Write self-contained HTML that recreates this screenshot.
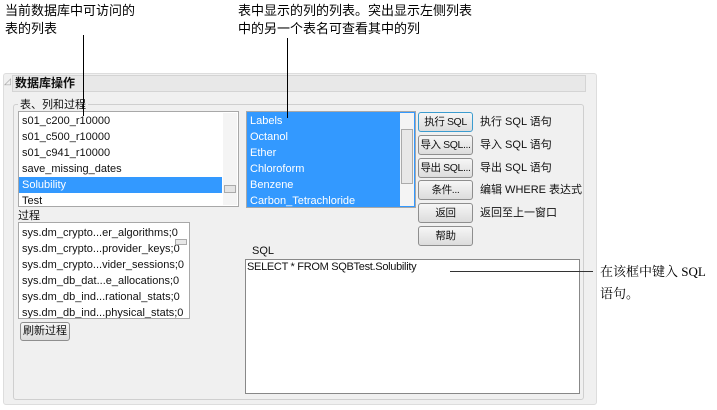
<!DOCTYPE html>
<html><head><meta charset="utf-8"><style>
*{margin:0;padding:0;box-sizing:border-box}
body{width:717px;height:410px;background:#fff;position:relative;overflow:hidden;font-family:"Liberation Sans","Noto Sans CJK SC",sans-serif;font-size:11px;color:#111}
.a{position:absolute;white-space:nowrap}
.ann{font-size:13px;line-height:18px;color:#000}
.box{position:absolute;background:#fff;border:1px solid #a8a8a8;overflow:hidden}
.row{height:16px;line-height:16px;padding-left:3px;font-size:11px;white-space:nowrap}
.sel{background:#3399ff;color:#fff}
.sb{position:absolute;top:1px;bottom:1px;right:1px;width:14px;background:#f4f4f4}
.btn{position:absolute;left:418px;width:55px;height:20px;border:1px solid #8e8e8e;border-radius:3px;background:linear-gradient(#f6f6f6,#dcdcdc);text-align:center;line-height:18px;font-size:10.5px;letter-spacing:-0.4px;white-space:nowrap;overflow:hidden}
.desc{position:absolute;left:480px;font-size:11px;line-height:20px;white-space:nowrap}
.vl{position:absolute;width:1px;background:#000}
</style></head><body>
<div class="a ann" style="left:5px;top:2px">当前数据库中可访问的<br>表的列表</div>
<div class="a ann" style="left:238px;top:2px">表中显示的列的列表。突出显示左侧列表<br>中的另一个表名可查看其中的列</div>

<div class="a" style="left:3px;top:73px;width:594px;height:332px;background:#f0f0f0;border:1px solid #ddd;border-radius:3px"></div>
<div class="a" style="left:4px;top:76px;font-size:9px;color:#999">◿</div>
<div class="a" style="left:12px;top:75px;width:574px;height:17px;background:#e8e8e8;border:1px solid #d4d4d4;font-size:12px;font-weight:bold;line-height:15px;padding-left:2px">数据库操作</div>
<div class="a" style="left:13px;top:104px;width:571px;height:296px;border:1px solid #cfcfcf;border-radius:3px"></div>
<div class="a" style="left:18px;top:96px;background:#f0f0f0;padding:0 2px;font-size:11px">表、列和过程</div>

<div class="box" style="left:18px;top:111px;width:221px;height:96px">
<div style="padding-top:1px">
<div class="row">s01_c200_r10000</div><div class="row">s01_c500_r10000</div><div class="row">s01_c941_r10000</div><div class="row">save_missing_dates</div><div class="row sel" style="margin-right:16px">Solubility</div><div class="row">Test</div></div>
<div class="sb"><div style="position:absolute;left:1px;top:72px;width:12px;height:8px;border:1px solid #aaa;background:#e4e4e4"></div></div>
</div>

<div class="box" style="left:246px;top:111px;width:170px;height:97px;background:#3399ff">
<div style="padding-top:1px;color:#fff">
<div class="row">Labels</div><div class="row">Octanol</div><div class="row">Ether</div><div class="row">Chloroform</div><div class="row">Benzene</div><div class="row">Carbon_Tetrachloride</div></div>
<div class="sb"><div style="position:absolute;left:1px;top:16px;width:12px;height:55px;border:1px solid #aaa;background:#e8e8e8"></div></div>
</div>

<div class="btn" style="top:112px;border-color:#3c9ccf">执行 SQL</div><div class="desc" style="top:112px">执行 SQL 语句</div>
<div class="btn" style="top:135px">导入 SQL...</div><div class="desc" style="top:135px">导入 SQL 语句</div>
<div class="btn" style="top:158px">导出 SQL...</div><div class="desc" style="top:158px">导出 SQL 语句</div>
<div class="btn" style="top:180px">条件...</div><div class="desc" style="top:180px">编辑 WHERE 表达式</div>
<div class="btn" style="top:203px">返回</div><div class="desc" style="top:203px">返回至上一窗口</div>
<div class="btn" style="top:226px">帮助</div>

<div class="a" style="left:18px;top:207px;font-size:11px">过程</div>
<div class="box" style="left:18px;top:222px;width:172px;height:97px">
<div style="padding-top:2px">
<div class="row">sys.dm_crypto...er_algorithms;0</div><div class="row">sys.dm_crypto...provider_keys;0</div><div class="row">sys.dm_crypto...vider_sessions;0</div><div class="row">sys.dm_db_dat...e_allocations;0</div><div class="row">sys.dm_db_ind...rational_stats;0</div><div class="row">sys.dm_db_ind...physical_stats;0</div></div>
<div style="position:absolute;left:156px;top:16px;width:12px;height:6px;border:1px solid #aaa;background:#e8e8e8"></div>
</div>
<div class="a" style="left:20px;top:322px;width:50px;height:19px;border:1px solid #8e8e8e;border-radius:3px;background:linear-gradient(#f6f6f6,#dcdcdc);text-align:center;line-height:17px">刷新过程</div>

<div class="a" style="left:252px;top:245px">SQL</div>
<div class="box" style="left:245px;top:259px;width:335px;height:135px;border-color:#888"><div style="padding:1px 0 0 1px;font-size:11px;letter-spacing:-0.3px">SELECT * FROM SQBTest.Solubility</div></div>

<div class="vl" style="left:83px;top:35px;height:81px"></div>
<div class="vl" style="left:287px;top:38px;height:80px"></div>
<div class="a" style="left:450px;top:271px;width:143px;height:1px;background:#333"></div>
<div class="a ann" style="left:600px;top:261px;line-height:22px;font-family:'Liberation Serif','Noto Serif CJK SC',serif">在该框中键入 SQL<br>语句。</div>
</body></html>
